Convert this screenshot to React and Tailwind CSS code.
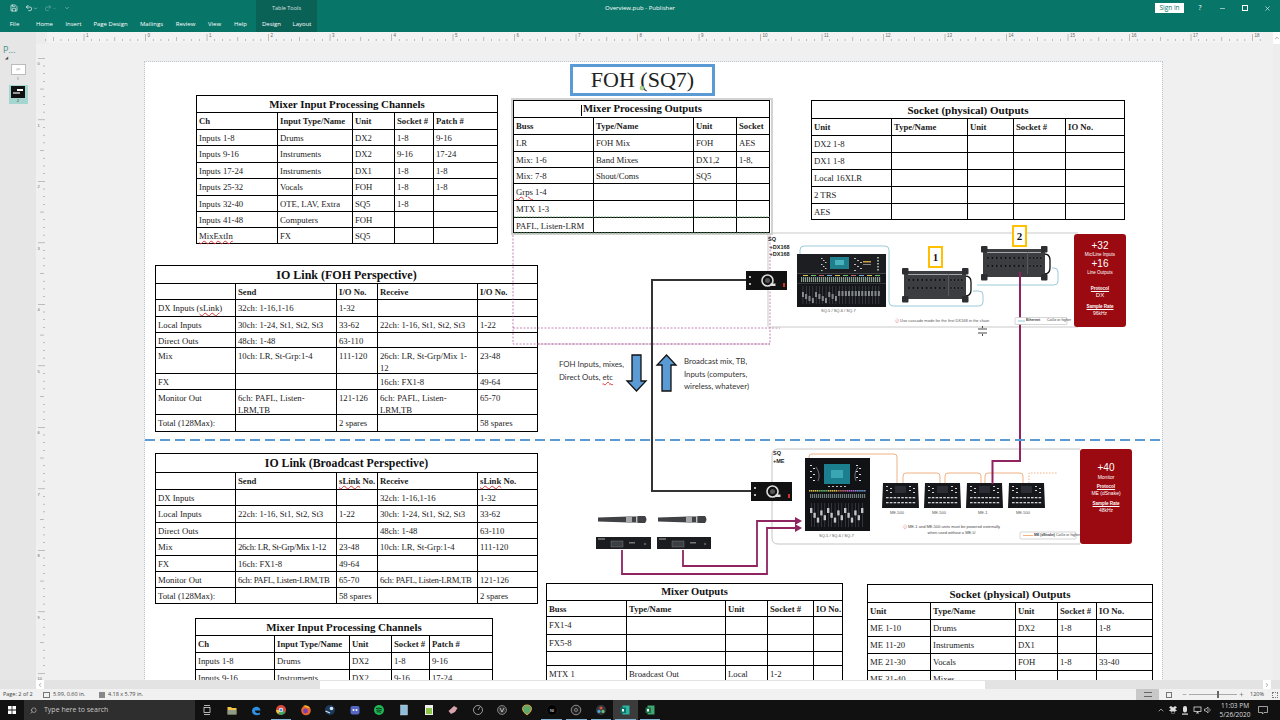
import { Save, Undo2, Redo2, ChevronDown, ChevronUp, ChevronLeft, ChevronRight, Minus, Plus, X, Search } from "lucide-react";

const Sq = ({ children }) => (
  <span className="underline decoration-wavy decoration-[#d33] decoration-[0.5px] underline-offset-1">{children}</span>
);

const Tight = ({ children }) => <span className="tracking-[-0.3px]">{children}</span>;

const tables = [
  {
    pos: "left-[51px] top-[33px] w-[302px]",
    grid: "grid-cols-[81px_75px_42px_39px_64px] grid-rows-[17px_17px_16px_17px_16px_17px_16px_16px_16px]",
    titleSize: "text-[10.9px]",
    title: "Mixer Input Processing Channels",
    head: ["Ch", "Input Type/Name", "Unit", "Socket #", "Patch #"],
    rows: [
      ["Inputs 1-8", "Drums", "DX2", "1-8", "9-16"],
      ["Inputs 9-16", "Instruments", "DX2", "9-16", "17-24"],
      ["Inputs 17-24", "Instruments", "DX1", "1-8", "1-8"],
      ["Inputs 25-32", "Vocals", "FOH", "1-8", "1-8"],
      ["Inputs 32-40", "OTE, LAV, Extra", "SQ5", "1-8", ""],
      ["Inputs 41-48", "Computers", "FOH", "", ""],
      [<Sq>MixExtIn</Sq>, "FX", "SQ5", "", ""],
    ],
  },
  {
    pos: "left-[368px] top-[38px] w-[257px]",
    grid: "grid-cols-[80px_100px_43px_33px] grid-rows-[17px_17px_17px_16px_16px_17px_17px_15px]",
    titleSize: "text-[10.7px]",
    title: (
      <>
        <span className="mr-px inline-block h-[11px] w-px bg-black align-middle" />
        Mixer Processing Outputs
      </>
    ),
    head: ["Buss", "Type/Name", "Unit", "Socket"],
    rows: [
      ["LR", "FOH Mix", "FOH", "AES"],
      ["Mix: 1-6", "Band Mixes", "DX1,2", "1-8,"],
      ["Mix: 7-8", "Shout/Coms", "SQ5", ""],
      [<><Sq>Grps</Sq> 1-4</>, "", "", ""],
      ["MTX 1-3", "", "", ""],
      ["PAFL, Listen-LRM", "", "", ""],
    ],
  },
  {
    pos: "left-[666px] top-[38px] w-[314px]",
    grid: "grid-cols-[80px_76px_46px_52px_59px] grid-rows-[18px_17px_17px_17px_17px_17px_16px]",
    titleSize: "text-[11px]",
    title: "Socket (physical) Outputs",
    head: ["Unit", "Type/Name", "Unit", "Socket #", "IO No."],
    rows: [
      ["DX2 1-8", "", "", "", ""],
      ["DX1 1-8", "", "", "", ""],
      ["Local 16XLR", "", "", "", ""],
      ["2 TRS", "", "", "", ""],
      ["AES", "", "", "", ""],
    ],
  },
  {
    pos: "left-[10px] top-[203px] w-[383px]",
    grid: "grid-cols-[80px_101px_41px_100px_60px] grid-rows-[18px_16px_17px_16px_15px_26px_16px_25px_17px]",
    titleSize: "text-[12px]",
    title: "IO Link (FOH Perspective)",
    head: ["", "Send", "I/O No.", "Receive", "I/O No."],
    rows: [
      [<>DX Inputs (<Sq>sLink</Sq>)</>, "32ch: 1-16,1-16", "1-32", "", ""],
      ["Local Inputs", "30ch: 1-24, St1, St2, St3", "33-62", "22ch: 1-16, St1, St2, St3", "1-22"],
      ["Direct Outs", "48ch: 1-48", "63-110", "", ""],
      ["Mix", "10ch: LR, St-Grp:1-4", "111-120", <>26ch: LR, St-Grp/Mix 1-<br />12</>, "23-48"],
      ["FX", "", "", "16ch: FX1-8", "49-64"],
      ["Monitor Out", <>6ch: PAFL, Listen-<br />LRM,TB</>, "121-126", <>6ch: PAFL, Listen-<br />LRM,TB</>, "65-70"],
      ["Total (128Max):", "", "2 spares", "", "58 spares"],
    ],
  },
  {
    pos: "left-[10px] top-[391px] w-[383px]",
    grid: "grid-cols-[80px_101px_41px_100px_60px] grid-rows-[19px_17px_16px_17px_16px_17px_16px_16px_16px]",
    titleSize: "text-[11.8px]",
    title: "IO Link (Broadcast Perspective)",
    head: ["", "Send", <><Sq>sLink</Sq> No.</>, "Receive", <><Sq>sLink</Sq> No.</>],
    rows: [
      ["DX Inputs", "", "", "32ch: 1-16,1-16", "1-32"],
      ["Local Inputs", "22ch: 1-16, St1, St2, St3", "1-22", "30ch: 1-24, St1, St2, St3", "33-62"],
      ["Direct Outs", "", "", "48ch: 1-48", "63-110"],
      ["Mix", <Tight>26ch: LR, St-Grp/Mix 1-12</Tight>, "23-48", "10ch: LR, St-Grp:1-4", "111-120"],
      ["FX", "16ch: FX1-8", "49-64", "", ""],
      ["Monitor Out", <Tight>6ch: PAFL, Listen-LRM,TB</Tight>, "65-70", <Tight>6ch: PAFL, Listen-LRM,TB</Tight>, "121-126"],
      ["Total (128Max):", "", "58 spares", "", "2 spares"],
    ],
  },
  {
    pos: "left-[50px] top-[556px] w-[298px]",
    grid: "grid-cols-[79px_75px_42px_38px_63px] grid-rows-[17px_17px_17px_17px]",
    titleSize: "text-[10.9px]",
    title: "Mixer Input Processing Channels",
    head: ["Ch", "Input Type/Name", "Unit", "Socket #", "Patch #"],
    rows: [
      ["Inputs 1-8", "Drums", "DX2", "1-8", "9-16"],
      ["Inputs 9-16", "Instruments", "DX2", "9-16", "17-24"],
    ],
  },
  {
    pos: "left-[401px] top-[521px] w-[297px]",
    grid: "grid-cols-[80px_99px_42px_46px_29px] grid-rows-[17px_16px_18px_17px_14px_17px]",
    titleSize: "text-[10.5px]",
    title: "Mixer Outputs",
    head: ["Buss", "Type/Name", "Unit", "Socket #", "IO No."],
    rows: [
      ["FX1-4", "", "", "", ""],
      ["FX5-8", "", "", "", ""],
      ["", "", "", "", ""],
      ["MTX 1", "Broadcast Out", "Local", "1-2", ""],
    ],
  },
  {
    pos: "left-[722px] top-[522px] w-[286px]",
    grid: "grid-cols-[63px_85px_42px_39px_56px] grid-rows-[18px_17px_17px_17px_17px_17px]",
    titleSize: "text-[11px]",
    title: "Socket (physical) Outputs",
    head: ["Unit", "Type/Name", "Unit", "Socket #", "IO No."],
    rows: [
      ["ME 1-10", "Drums", "DX2", "1-8", "1-8"],
      ["ME 11-20", "Instruments", "DX1", "", ""],
      ["ME 21-30", "Vocals", "FOH", "1-8", "33-40"],
      ["ME 31-40", "Mixes", "", "", ""],
    ],
  },
];

const DocTable = ({ t }) => (
  <div className={`absolute grid border-t border-l border-black bg-white font-['Liberation_Serif',serif] text-[8.7px] leading-[12px] whitespace-nowrap text-[#222] ${t.pos} ${t.grid}`}>
    <div className={`col-span-full flex items-center justify-center border-r border-b border-black font-bold text-[#111] ${t.titleSize}`}>
      <span>{t.title}</span>
    </div>
    {t.head.map((h, i) => (
      <div key={i} className="border-r border-b border-black px-[2px] pt-[2px] font-bold">
        {h}
      </div>
    ))}
    {t.rows.map((r, i) =>
      r.map((c, j) => (
        <div key={`${i}-${j}`} className="border-r border-b border-black px-[2px] pt-[2px]">
          {c}
        </div>
      )),
    )}
  </div>
);

const range = (n) => Array.from({ length: n }, (_, i) => i);

const MixerWide = ({ x, y }) => (
  <g transform={`translate(${x} ${y})`}>
    <rect width="89" height="53" fill="#14161a" />
    <rect y="0" width="89" height="19" fill="#1c1e22" />
    <rect x="33" y="3" width="19" height="12" fill="#1f7f8c" />
    <rect x="38" y="6" width="9" height="5" fill="#49b3bd" />
    {range(7).map((i) => <rect key={i} x={24 + (i % 3) * 2} y={4 + i * 2} width="1.5" height="1" fill="#ccc" />)}
    {range(7).map((i) => <rect key={i} x={57 + (i % 3) * 3} y={4 + i * 2} width="2" height="1" fill="#bbb" />)}
    <rect x="66" y="7" width="8" height="1.5" fill="#c9a23a" />
    <rect x="66" y="10" width="8" height="1" fill="#888" />
    {range(5).map((i) => <rect key={i} x="80" y={3 + i * 3} width="2" height="1.5" fill="#9a9" />)}
    <rect x="0" y="19" width="89" height="1" fill="#444" />
    {range(10).map((i) => <rect key={i} x={6 + i * 8} y="21" width="5" height="1" fill={["#d8c24a", "#6fbf6a", "#c76a6a", "#7aa7d8"][i % 4]} />)}
    {range(40).map((i) => <rect key={i} x={4 + i * 2} y="23" width="1.2" height="5" fill="#a7c0b0" opacity="0.8" />)}
    <rect x="0" y="29" width="89" height="1" fill="#33363b" />
    {range(24).map((i) => <rect key={i} x={5 + i * 3.3} y={i < 11 ? 38 + (i % 4) * 2 : 37} width="1.8" height="5" fill="#a9adb0" />)}
    {range(24).map((i) => <rect key={i} x={5.7 + i * 3.3} y="32" width="0.5" height="18" fill="#55585c" />)}
  </g>
);

const MixerTall = ({ x, y }) => (
  <g transform={`translate(${x} ${y})`}>
    <rect width="65" height="73" fill="#101216" />
    <rect x="19" y="6" width="26" height="20" fill="#1c7f8f" />
    <rect x="26" y="12" width="12" height="8" fill="#3aa6b4" />
    {range(6).map((i) => <rect key={i} x={5 + (i % 2) * 3} y={7 + i * 3} width="2" height="1" fill="#ddd" />)}
    {range(6).map((i) => <rect key={i} x={51 + (i % 2) * 3} y={7 + i * 3} width="2" height="1" fill="#ddd" />)}
    <path d="M11 9 q5 7 2 14 M53 9 q-5 7 -2 14" stroke="#aaa" strokeWidth="0.6" fill="none" />
    {range(5).map((i) => <rect key={i} x={23 + i * 4} y="28" width="2" height="1" fill="#bbb" />)}
    {range(30).map((i) => <rect key={i} x={4 + i * 1.9} y="32" width="1.4" height="1.6" fill={["#d8c24a", "#6fbf6a", "#d8c24a", "#c46a6a", "#b56ad8", "#6aa2d8"][Math.floor(i / 5)]} />)}
    {range(28).map((i) => <rect key={i} x={5 + i * 2} y="36" width="1.2" height="4" fill="#9aa" opacity="0.7" />)}
    {range(16).map((i) => <rect key={i} x={6 + i * 3.4} y="45" width="0.5" height="24" fill="#55585c" />)}
    {range(16).map((i) => <rect key={i} x={5 + i * 3.4} y={50 + ((i * 7) % 5) * 2.4} width="2.4" height="5" fill="#c2c5c8" />)}
  </g>
);

const StageBox = ({ x, y }) => (
  <g transform={`translate(${x} ${y})`}>
    <path d="M63 8 q6 0 6 6 v8 q0 6 -6 6" stroke="#111" strokeWidth="1.3" fill="none" />
    <rect x="2" y="3" width="62" height="28" fill="#3b3d40" />
    <rect x="6" y="6" width="54" height="1" fill="#a5a8ab" />
    {[[0, 0], [0, 28], [60, 0], [60, 28]].map(([cx, cy]) => <rect key={`${cx}-${cy}`} x={cx} y={cy} width="6.5" height="6.5" rx="1" fill="#2c2e31" />)}
    {[12, 20].map((cy) => range(9).map((i) => <circle key={`${cy}-${i}`} cx={7 + i * 4.4} cy={cy} r="1.4" fill="#0c0d0e" stroke="#7a7d80" strokeWidth="0.3" />))}
    {[12, 20].map((cy) => range(4).map((i) => <circle key={`${cy}-${i}`} cx={49 + i * 3.6} cy={cy} r="1.3" fill="#0c0d0e" stroke="#7a7d80" strokeWidth="0.3" />))}
    <rect x="46" y="6" width="0.7" height="22" fill="#666" />
  </g>
);

const MeUnit = ({ x, y }) => (
  <g transform={`translate(${x} ${y})`}>
    <path d="M1 0 H36 L37 25 H0 Z" fill="#15171b" />
    <rect x="13" y="3" width="11" height="7" fill="#2b2f35" />
    {range(4).map((i) => <rect key={i} x={4 + (i % 2) * 4} y={3 + i * 2} width="2" height="1" fill="#cfd2d4" />)}
    {range(4).map((i) => <rect key={i} x={27 + (i % 2) * 4} y={3 + i * 2} width="2" height="1" fill="#cfd2d4" />)}
    {range(8).map((i) => <rect key={i} x={4 + i * 3.8} y="14" width="2.6" height="1.3" fill="#cfd2d4" />)}
    {range(8).map((i) => <rect key={i} x={4 + i * 3.8} y="19" width="2.6" height="1.3" fill="#cfd2d4" />)}
  </g>
);

const Xlr = ({ x, y, w = 41, h = 19 }) => (
  <g transform={`translate(${x} ${y})`}>
    <rect width={w} height={h} fill="#111" />
    <circle cx={w / 2 + 1} cy={h / 2} r="5.5" fill="none" stroke="#ddd" strokeWidth="1.6" />
    <circle cx={w / 2 + 1} cy={h / 2} r="2.5" fill="#555" />
    <rect x={w / 2 + 4} y={h / 2 + 3} width="5" height="2.5" fill="#ddd" />
    <rect x="3" y="5" width="2" height="2" fill="#bbb" />
    <rect x="3" y="12" width="2" height="2" fill="#bbb" />
    <rect x={w - 4} y="12" width="2" height="4" fill="#c33" />
  </g>
);

const Mic = ({ x, y }) => (
  <g transform={`translate(${x} ${y})`}>
    <path d="M0 1.5 L31 0.5 H38 L41 0 H47 Q50 3.5 47 7 H41 L38 6.5 H31 L0 5.5 Z" fill="#3f4144" />
    <rect x="28" y="0.8" width="6" height="5.4" fill="#a5a8ab" />
    <rect x="38" y="0.3" width="1.4" height="6.4" fill="#c4c4c4" />
  </g>
);

const Receiver = ({ x, y, w }) => (
  <g transform={`translate(${x} ${y})`}>
    <rect width={w} height="12" fill="#1a1c1f" />
    <rect x="2" y="1.5" width="7" height="1" fill="#aaa" />
    <rect x="15" y="4" width="12" height="6" fill="#3c3f42" stroke="#aaa" strokeWidth="0.3" />
    <rect x="33" y="5" width="6" height="1.5" fill="#777" />
    <circle cx={w - 6} cy="7" r="1.3" fill="#555" />
  </g>
);

const Diagram = () => (
  <svg className="absolute top-0 left-0 h-[700px] w-[1017px]" viewBox="145 62 1017 700" fill="none">
    {/* margin guides */}
    <path d="M513 235 V344 H770 V235 M513 328 H780 M538 344 H770" stroke="#a8558f" strokeWidth="0.7" strokeDasharray="2 1.5" />
    <path d="M514 217 H770 M514 233 H770" stroke="#5fa36a" strokeWidth="0.8" strokeDasharray="2 1" />

    {/* upper rig */}
    <path d="M771 233 H1078 M771 327 H1078 M768 233 V327" stroke="#c9c9c9" />
    <path d="M800 255 V250 Q800 246 804 246 H885 Q889 246 889 250 V302 Q889 306 893 306 H979 Q983 306 983 302 V295 Q983 291 979 291 H973" stroke="#8fc4d6" strokeWidth="0.9" />
    <path d="M977 285 H1054 Q1058 285 1058 281 V272 Q1058 268 1054 268 H1052" stroke="#8fc4d6" strokeWidth="0.9" />
    <MixerWide x={797} y={254} />
    <StageBox x={902} y={268} />
    <StageBox x={981} y={246} />
    <path d="M652 492 V280 H746" stroke="#333" strokeWidth="2" />
    <path d="M652 491 H752" stroke="#333" strokeWidth="2" />
    <Xlr x={746} y={271} />

    {/* lower rig */}
    <path d="M1080 449 H778 Q772 449 772 455 V538 Q772 544 778 544 H1080" stroke="#bdbdbd" strokeWidth="0.9" />
    <path d="M809 459 V457 Q809 454 812 454 H894 Q897 454 897 457 V483" stroke="#f0b183" />
    <path d="M903 483 V476 Q903 473 906 473 H937 Q940 473 940 476 V483 M945 483 V476 Q945 473 948 473 H978 Q981 473 981 476 V483 M985 483 V476 Q985 473 988 473 H1020 Q1023 473 1023 476 V483" stroke="#f0b183" />
    <path d="M1029 483 V473 H1058" stroke="#f0b183" strokeDasharray="1.5 1.5" />
    <MixerTall x={805} y={458} />
    <MeUnit x={882} y={483} />
    <MeUnit x={924} y={483} />
    <MeUnit x={966} y={483} />
    <MeUnit x={1008} y={483} />
    <Xlr x={751} y={482} />

    {/* stage link */}
    <path d="M1020 272 V461 H992.5 V484" stroke="#8f2460" strokeWidth="2" />

    {/* wireless */}
    <Mic x={598} y={516} />
    <Mic x={658} y={516} />
    <Receiver x={596} y={537} w={55} />
    <Receiver x={657} y={537} w={54} />
    <path d="M622 550 V574 H767 V528 H796 M683 550 V566 H757 V521 H796" stroke="#8f2460" strokeWidth="1.8" />
    <path d="M795 517 L802 521 L795 525 Z M795 524 L802 528 L795 532 Z" fill="#8f2460" />

    {/* direction arrows */}
    <path d="M632 355 H641 V381 H646 L636.5 391 L627 381 H632 Z" fill="#5b9bd5" stroke="#111" strokeWidth="1.3" />
    <path d="M662 391 H671 V365 H676 L666.5 355 L657 365 H662 Z" fill="#5b9bd5" stroke="#111" strokeWidth="1.3" />

    {/* split between the two rooms */}
    <path d="M145 440 H1162" stroke="#5b9bd5" strokeWidth="2" strokeDasharray="10 5" />

    {/* resize pointer + rotate handle */}
    <path d="M978 329 H987 M978 333 H987 M982.5 326 V328 M982.5 334 V336" stroke="#333" strokeWidth="0.9" />
    <circle cx="642" cy="88" r="2" fill="#b6d98c" stroke="#7f9f5f" strokeWidth="0.5" />

    {/* legend boxes */}
    <rect x="1015" y="317.5" width="52" height="7" rx="1" stroke="#bbb" strokeWidth="0.6" fill="#fff" />
    <path d="M1018 321 H1025" stroke="#8fc4d6" />
    <rect x="1020" y="532" width="56" height="7" rx="1" stroke="#bbb" strokeWidth="0.6" fill="#fff" />
    <path d="M1023 535.5 H1033" stroke="#f0b183" />
  </svg>
);

const Tiny = ({ pos, children }) => (
  <div className={`absolute whitespace-nowrap font-['Liberation_Sans',sans-serif] ${pos}`}>{children}</div>
);

const RedCard = ({ pos, children }) => (
  <div className={`absolute flex flex-col items-center rounded-[3px] bg-[#9a0a10] font-['Liberation_Sans',sans-serif] text-white ${pos}`}>
    {children}
  </div>
);

const DocPage = () => (
  <div className="relative h-[700px] w-[1017px] shrink-0 bg-white outline outline-dotted outline-[#bcc7d0]">
    <div className="absolute top-[36px] left-[366px] h-[137px] w-[262px] border-2 border-[#d2d2d2]" />
    {tables.map((t, i) => <DocTable key={i} t={t} />)}

    <div className="absolute top-[2px] left-[425px] flex h-[32px] w-[145px] items-center justify-center border-[3px] border-[#5b9bd5] bg-white font-['Liberation_Serif',serif] text-[22px] leading-none text-[#222]">
      FOH (SQ7)
    </div>

    <Diagram />

    <div className="absolute top-[296px] left-[414px] font-['Lato',sans-serif] text-[7.8px] leading-[13px] text-[#333]">
      FOH Inputs, mixes,<br />Direct Outs, <Sq>etc</Sq>
    </div>
    <div className="absolute top-[293px] left-[539px] font-['Lato',sans-serif] text-[7.8px] leading-[12.5px] text-[#333]">
      Broadcast mix, TB,<br />Inputs (computers,<br />wireless, whatever)
    </div>

    {/* upper rig labels */}
    <Tiny pos="left-[623px] top-[174px] text-[5.5px] leading-[7.5px] font-bold text-[#222]">SQ<br />&nbsp;+DX168<br />&nbsp;+DX168</Tiny>
    <div className="absolute top-[184px] left-[783px] flex h-[22px] w-[15px] items-center justify-center border-2 border-[#ffc000] bg-white font-['Liberation_Serif',serif] text-[11px] font-bold text-[#111]">1</div>
    <div className="absolute top-[163px] left-[867px] flex h-[22px] w-[15px] items-center justify-center border-2 border-[#ffc000] bg-white font-['Liberation_Serif',serif] text-[11px] font-bold text-[#111]">2</div>
    <Tiny pos="left-[676px] top-[246px] text-[4px] text-[#555]">SQ-5 / SQ-6 / SQ-7</Tiny>
    <Tiny pos="left-[750px] top-[256px] text-[4px] text-[#555]"><span className="text-[#c33]">ⓘ</span> Use cascade mode for the first DX168 in the chain</Tiny>
    <Tiny pos="left-[881px] top-[256px] text-[3.5px] text-[#444]"><b>Ethernet</b></Tiny>
    <Tiny pos="left-[902px] top-[256px] text-[3.5px] text-[#444]">Cat5e or higher</Tiny>
    <RedCard pos="left-[929px] top-[172px] h-[93px] w-[52px] pt-[6px]">
      <span className="text-[10px] leading-[12px]">+32</span>
      <span className="text-[4.5px] leading-[6px]">Mic/Line Inputs</span>
      <span className="text-[10px] leading-[12px]">+16</span>
      <span className="text-[4.5px] leading-[6px]">Line Outputs</span>
      <span className="mt-[10px] text-[4.5px] leading-[6px] font-bold underline">Protocol</span>
      <span className="text-[6px] leading-[7px]">DX</span>
      <span className="mt-[5px] text-[4.5px] leading-[6px] font-bold underline">Sample Rate</span>
      <span className="text-[5px] leading-[7px]">96kHz</span>
    </RedCard>

    {/* lower rig labels */}
    <Tiny pos="left-[628px] top-[387px] text-[5.5px] leading-[8px] font-bold text-[#222]">SQ<br />+ME</Tiny>
    <Tiny pos="left-[674px] top-[471px] text-[4px] text-[#555]">SQ-5 / SQ-6 / SQ-7</Tiny>
    <Tiny pos="left-[745px] top-[448px] text-[4px] text-[#555]">ME-500</Tiny>
    <Tiny pos="left-[787px] top-[448px] text-[4px] text-[#555]">ME-500</Tiny>
    <Tiny pos="left-[833px] top-[448px] text-[4px] text-[#555]">ME-1</Tiny>
    <Tiny pos="left-[871px] top-[448px] text-[4px] text-[#555]">ME-500</Tiny>
    <Tiny pos="left-[755px] top-[462px] w-[103px] text-center text-[4px] leading-[6px] text-[#444]"><span className="text-[#c33]">ⓘ</span> ME-1 and ME-500 units must be powered externally<br />when used without a ME-U</Tiny>
    <Tiny pos="left-[889px] top-[471px] text-[3.5px] text-[#444]"><b>ME (dSnake)</b> Cat5e or higher</Tiny>
    <RedCard pos="left-[935px] top-[387px] h-[95px] w-[52px] pt-[13px]">
      <span className="text-[10px] leading-[12px]">+40</span>
      <span className="text-[5px] leading-[6px]">Monitor</span>
      <span className="mt-[4px] text-[4.5px] leading-[6px] font-bold underline">Protocol</span>
      <span className="text-[5px] leading-[7px]">ME (dSnake)</span>
      <span className="mt-[4px] text-[4.5px] leading-[6px] font-bold underline">Sample Rate</span>
      <span className="text-[5px] leading-[7px]">48kHz</span>
    </RedCard>
  </div>
);

const TitleBar = () => (
  <header className="flex h-[32px] shrink-0 bg-[#077568] font-['Open_Sans',sans-serif] text-[6px] text-white">
    <div className="flex w-[256px] flex-col">
      <div className="flex h-[16px] items-center pl-[10px] text-white">
        <Save size={8} />
        <Undo2 size={8} className="ml-[7px]" />
        <ChevronDown size={5} />
        <Redo2 size={8} className="ml-[6px] opacity-40" />
        <ChevronDown size={5} className="opacity-40" />
        <ChevronDown size={6} className="ml-[7px] opacity-80" />
      </div>
      <nav className="flex h-[16px] items-center">
        <span className="w-[29px] text-center">File</span>
        <span className="w-[31px] text-center">Home</span>
        <span className="w-[27px] text-center">Insert</span>
        <span className="w-[47px] text-center">Page Design</span>
        <span className="w-[35px] text-center">Mailings</span>
        <span className="w-[33px] text-center">Review</span>
        <span className="w-[25px] text-center">View</span>
        <span className="w-[27px] text-center">Help</span>
      </nav>
    </div>
    <div className="flex w-[61px] flex-col bg-[#0a6156]">
      <div className="flex h-[16px] items-center justify-center text-[5.5px] opacity-80">Table Tools</div>
      <div className="flex h-[16px] items-center">
        <span className="w-[31px] text-center">Design</span>
        <span className="w-[30px] text-center">Layout</span>
      </div>
    </div>
    <div className="flex h-[16px] flex-1 items-center">
      <span className="ml-[288px]">Overview.pub - Publisher</span>
      <span className="ml-auto flex h-[10px] w-[29px] items-center justify-center bg-white text-[6.5px] text-[#077568]">Sign in</span>
      <span className="ml-[13px] w-[6px] text-center text-[7px]">?</span>
      <Minus size={7} className="ml-[16px]" />
      <span className="ml-[16px] h-[6px] w-[6px] border border-white" />
      <X size={7} className="mr-[9px] ml-[16px]" />
    </div>
  </header>
);

const HRuler = () => (
  <div className="flex h-[12px] shrink-0 bg-[#f0f0f0]">
    <div className="w-[36px] bg-[#e6e6e6]" />
    <svg className="h-[12px] w-[1226px]" viewBox="36 0 1226 12">
      <rect x="36" y="0" width="11" height="12" fill="#ececec" />
      <rect x="47" y="0" width="1215" height="10.5" fill="#f3f3f3" />
      {range(200).map((i) => {
        const x = 47 + (i * 61.5) / 8 - 1.7;
        return <rect key={i} x={x} y={(i % 8 === 5) ? 2 : (i % 4 === 1 ? 5 : 7)} width="0.6" height={(i % 8 === 5) ? 7 : (i % 4 === 1 ? 4 : 2)} fill="#999" />;
      })}
      {range(20).map((i) => (
        <text key={i} x={85 + i * 61.5 + 1} y="5" fontSize="4.5" fill="#666" fontFamily="Liberation Sans">{i < 2 ? 1 - i : i - 1}</text>
      ))}
    </svg>
    <div className="flex w-[18px] justify-end">
      <div className="flex h-[12px] w-[7px] items-center justify-center bg-white"><ChevronUp size={6} className="text-[#555]" /></div>
    </div>
  </div>
);

const PagesPanel = () => (
  <aside className="flex w-[36px] shrink-0 flex-col items-center bg-[#e6e6e6] font-['Open_Sans',sans-serif]">
    <span className="self-start pl-[3px] text-[9px] leading-[11px] text-[#4a8f85]">P...</span>
    <span className="self-start pl-[5px] text-[4px] leading-[6px] text-[#444]">◢</span>
    <div className="mt-[3px] flex h-[11px] w-[15px] items-center justify-center border border-[#bbb] bg-white text-[5px] text-[#777]">⇦</div>
    <span className="text-[4px] leading-[7px] text-[#444]">1</span>
    <div className="mt-[3px] flex h-[19px] w-[19px] flex-col items-center bg-[#a5d5cf] pt-px">
      <div className="h-[12px] w-[14px] bg-[#111]">
        <div className="mt-[3px] ml-[6px] h-[2px] w-[6px] bg-white" />
        <div className="mt-[1px] ml-[2px] h-[2px] w-[7px] bg-[#999]" />
      </div>
      <span className="text-[4px] leading-[6px] text-[#333]">2</span>
    </div>
  </aside>
);

const VRuler = () => (
  <svg className="h-[636px] w-[11px] shrink-0 bg-[#f0f0f0]" viewBox="0 0 11 636">
    {range(90).map((i) => (
      <rect key={i} x={i % 8 === 0 ? 2 : i % 4 === 0 ? 4 : 7} y={22 + (i * 61.5) / 8 - 8} width={i % 8 === 0 ? 7 : i % 4 === 0 ? 4 : 2} height="0.6" fill="#999" />
    ))}
    {range(11).map((i) => (
      <text key={i} x="1.5" y={21 + i * 61.5} fontSize="4" fill="#666" fontFamily="Liberation Sans">{i}</text>
    ))}
  </svg>
);

const StatusBar = () => (
  <footer className="flex h-[11px] shrink-0 items-center bg-[#f1f1f1] font-['Open_Sans',sans-serif] text-[5.5px] text-[#444]">
    <span className="ml-[3px] w-[40px]">Page: 2 of 2</span>
    <span className="h-[6px] w-[7px] border border-[#777]" />
    <span className="ml-[3px] w-[46px]">5.99, 0.60 in.</span>
    <span className="h-[6px] w-[6px] bg-[#888]" />
    <span className="ml-[3px]">4.18 x 5.79 in.</span>
    <div className="ml-auto flex h-[11px] w-[23px] items-center justify-center bg-[#c8c8c8]">
      <div className="h-[5px] w-[8px] border-y border-[#666]" />
    </div>
    <div className="ml-[2px] flex w-[15px] justify-center"><div className="h-[6px] w-[6px] border border-[#777]" /></div>
    <Minus size={5} className="ml-[6px] text-[#555]" />
    <div className="relative ml-[2px] h-px w-[48px] bg-[#aaa]">
      <div className="absolute top-[-3px] left-[28px] h-[7px] w-[2px] bg-[#666]" />
    </div>
    <Plus size={5} className="ml-[2px] text-[#555]" />
    <span className="ml-[6px]">120%</span>
    <div className="mr-[2px] ml-[8px] h-[6px] w-[6px] border border-dotted border-[#777]" />
  </footer>
);

const taskIcons = [
  { key: "task", el: <g stroke="#ddd" strokeWidth="0.8" fill="none"><path d="M3 1.5 H9 M3 10.5 H9" /><rect x="3" y="3.5" width="6" height="5" /></g> },
  { key: "files", el: <><path d="M1.5 3 H5 L6 4 H10.5 V10.5 H1.5 Z" fill="#f4c24d" /><rect x="1.5" y="6" width="9" height="4.5" fill="#3a7bb8" opacity="0.55" /></> },
  { key: "edge", el: <path d="M2 7 C2 2 10 1 10.5 6.5 H5 C5 9 8 10 10 8.5 V10.5 C6 12 2 11 2 7 Z" fill="#2f8fe0" /> },
  { key: "chrome", el: <><circle cx="6" cy="6" r="5" fill="#d94a3d" /><path d="M6 6 L10.5 8 A5 5 0 0 1 3 10 Z" fill="#3ba55d" /><path d="M6 6 L3 10 A5 5 0 0 1 1 6 Z" fill="#f1c232" /><circle cx="6" cy="6" r="2.2" fill="#fff" /><circle cx="6" cy="6" r="1.6" fill="#4a90e2" /></>, run: true },
  { key: "firefox", el: <><circle cx="6" cy="6.5" r="4.8" fill="#e8652c" /><circle cx="5.5" cy="7" r="2.4" fill="#7a3fb5" /><path d="M3 2 Q7 0 10 4 L8 4 Z" fill="#f7b32d" /></> },
  { key: "steam", el: <><circle cx="6" cy="6" r="5" fill="#1c3b5c" /><circle cx="7.5" cy="4.5" r="1.8" fill="#d7e3ec" /><path d="M1.5 7 L6 9" stroke="#d7e3ec" strokeWidth="1.3" /></> },
  { key: "discord", el: <><rect x="1.5" y="2" width="9" height="8.5" rx="2" fill="#5566c4" /><circle cx="4.5" cy="6" r="1" fill="#fff" /><circle cx="7.5" cy="6" r="1" fill="#fff" /></> },
  { key: "spotify", el: <><circle cx="6" cy="6" r="5" fill="#1db954" /><path d="M3 4.5 Q6 3.5 9 5 M3.3 6.3 Q6 5.5 8.6 6.8 M3.7 8 Q6 7.3 8 8.4" stroke="#111" strokeWidth="0.8" fill="none" /></> },
  { key: "phone", el: <rect x="2.5" y="1" width="7" height="10" fill="#8fbfdc" stroke="#ddd" strokeWidth="0.4" /> },
  { key: "note", el: <><rect x="2" y="1" width="8" height="10" fill="#eee" /><rect x="3" y="4" width="6" height="6" fill="#8bc34a" /></> },
  { key: "wing", el: <path d="M1.5 7 L7 2 L10.5 4 L8 8 L4 10 Z" fill="#d9a3ad" /> },
  { key: "dial", el: <><circle cx="6" cy="6" r="4.5" fill="none" stroke="#bbb" strokeWidth="0.8" /><path d="M6 6 L8 3" stroke="#bbb" strokeWidth="0.8" /></> },
  { key: "wave", el: <><circle cx="6" cy="6" r="4.5" fill="#333" stroke="#999" strokeWidth="0.7" /><path d="M4 4 L6 8 L8 4" stroke="#ddd" strokeWidth="0.8" fill="none" /></> },
  { key: "map", el: <path d="M6 1 Q10.5 1 10.5 5 Q10.5 8 6 11 Q1.5 8 1.5 5 Q1.5 1 6 1 Z" fill="#5fa86b" stroke="#d9a340" strokeWidth="1" /> },
  { key: "ni", el: <><circle cx="6" cy="6" r="5.2" fill="#000" stroke="#333" strokeWidth="0.4" /><text x="6" y="7.6" fontSize="4" fill="#fff" textAnchor="middle" fontFamily="Liberation Sans">NI</text></>, run: true },
  { key: "obs", el: <><circle cx="6" cy="6" r="4.8" fill="#222" stroke="#bbb" strokeWidth="0.7" /><circle cx="6" cy="6" r="1.5" fill="none" stroke="#bbb" strokeWidth="0.6" /></>, run: true },
  { key: "resolve", el: <><circle cx="6" cy="6" r="5" fill="#34383d" /><circle cx="6" cy="4" r="1.6" fill="#e0533d" /><circle cx="4" cy="7.4" r="1.6" fill="#4aa3df" /><circle cx="8" cy="7.4" r="1.6" fill="#6fbf6a" /></>, run: true },
  { key: "pub", el: <><rect x="3.5" y="1.5" width="7" height="9" fill="#2fb3a3" /><rect x="1.5" y="3.5" width="5.5" height="5.5" fill="#077568" /><rect x="3" y="5" width="2" height="2.5" fill="#fff" /></>, run: true, active: true },
  { key: "excel", el: <><rect x="3.5" y="1.5" width="7" height="9" fill="#3fa670" /><rect x="1.5" y="3.5" width="5.5" height="5.5" fill="#1a7145" /><rect x="3" y="5" width="2" height="2.5" fill="#fff" /></>, run: true },
];

const Taskbar = () => (
  <footer className="flex h-[20px] shrink-0 items-center bg-[#111] font-['Open_Sans',sans-serif] text-white">
    <div className="flex w-[24px] justify-center">
      <svg className="h-[8px] w-[8px]" viewBox="0 0 8 8"><path d="M0 0 H3.6 V3.6 H0 Z M4.4 0 H8 V3.6 H4.4 Z M0 4.4 H3.6 V8 H0 Z M4.4 4.4 H8 V8 H4.4 Z" fill="#fff" /></svg>
    </div>
    <div className="flex h-[20px] w-[171px] items-center bg-[#2e2e2e] pl-[6px] text-[7px] text-[#c8c8c8]">
      <Search size={7} className="-scale-x-100" />
      <span className="ml-[7px]">Type here to search</span>
    </div>
    <div className="flex">
      {taskIcons.map((ic) => (
        <div key={ic.key} className={`relative flex h-[20px] w-[24.6px] items-center justify-center ${ic.active ? "bg-[#3b3b3b]" : ""}`}>
          <svg className="h-[12px] w-[12px]" viewBox="0 0 12 12">{ic.el}</svg>
          {ic.run && <span className="absolute right-[2px] bottom-0 left-[2px] h-[1.5px] bg-[#7fb3d5]" />}
        </div>
      ))}
    </div>
    <div className="ml-auto flex items-center text-[#ddd]">
      <ChevronUp size={8} />
      <svg className="ml-[4px] h-[8px] w-[8px]" viewBox="0 0 8 8"><path d="M0 1.5 L2 0 L4 1.5 L6 0 L8 1.5 L6 3 L8 4.5 L5 6 L4 5 L3 6 L0 4.5 L2 3 Z M2 6.2 L4 7.8 L6 6.2 V7 L4 8 L2 7 Z" fill="#ddd" /></svg>
      <svg className="ml-[4px] h-[9px] w-[8px]" viewBox="0 0 8 9"><rect x="2" y="0" width="4" height="6.5" rx="2" fill="#ddd" /><rect x="1" y="7.5" width="6" height="1.2" fill="#ddd" /></svg>
      <svg className="ml-[4px] h-[8px] w-[9px]" viewBox="0 0 9 8"><rect x="1" y="1" width="7" height="4.5" fill="none" stroke="#ddd" strokeWidth="0.8" /><path d="M3 7 H6 M4.5 5.5 V7" stroke="#ddd" strokeWidth="0.8" /></svg>
      <svg className="ml-[2px] h-[8px] w-[8px]" viewBox="0 0 8 8"><path d="M0.5 3 H2 L4 1 V7 L2 5 H0.5 Z" fill="none" stroke="#ddd" strokeWidth="0.7" /><path d="M5.5 2.5 Q7 4 5.5 5.5" stroke="#ddd" strokeWidth="0.6" fill="none" /></svg>
      <div className="ml-[6px] flex w-[34px] flex-col items-center text-[6.5px] leading-[9px]">
        <span>11:03 PM</span>
        <span>5/26/2020</span>
      </div>
      <svg className="mr-[12px] ml-[6px] h-[9px] w-[10px]" viewBox="0 0 10 9"><path d="M0.5 0.5 H9.5 V6.5 H6 L4.5 8 V6.5 H0.5 Z" fill="none" stroke="#ddd" strokeWidth="0.7" /></svg>
    </div>
  </footer>
);

export default function App() {
  return (
    <div className="flex h-[720px] w-[1280px] flex-col overflow-hidden bg-[#f0f0f0] opacity-[0.995]">
      <TitleBar />
      <HRuler />
      <div className="flex h-[636px] shrink-0">
        <PagesPanel />
        <VRuler />
        <main className="min-w-0 flex-1 overflow-hidden bg-[#f0f0f0] pt-[18px] pl-[98px]">
          <DocPage />
        </main>
        <div className="w-[7px] shrink-0 bg-[#ededed]" />
      </div>
      <div className="flex h-[9px] shrink-0 items-center bg-[#e3e3e3]">
        <div className="ml-[36px] flex h-[9px] w-[8px] items-center justify-center bg-white"><ChevronLeft size={6} className="text-[#555]" /></div>
        <div className="ml-[276px] h-[8px] w-[665px] bg-white" />
        <div className="ml-auto flex h-[9px] w-[8px] items-center justify-center bg-white"><ChevronRight size={6} className="text-[#555]" /></div>
        <div className="w-[9px]" />
      </div>
      <StatusBar />
      <Taskbar />
    </div>
  );
}
